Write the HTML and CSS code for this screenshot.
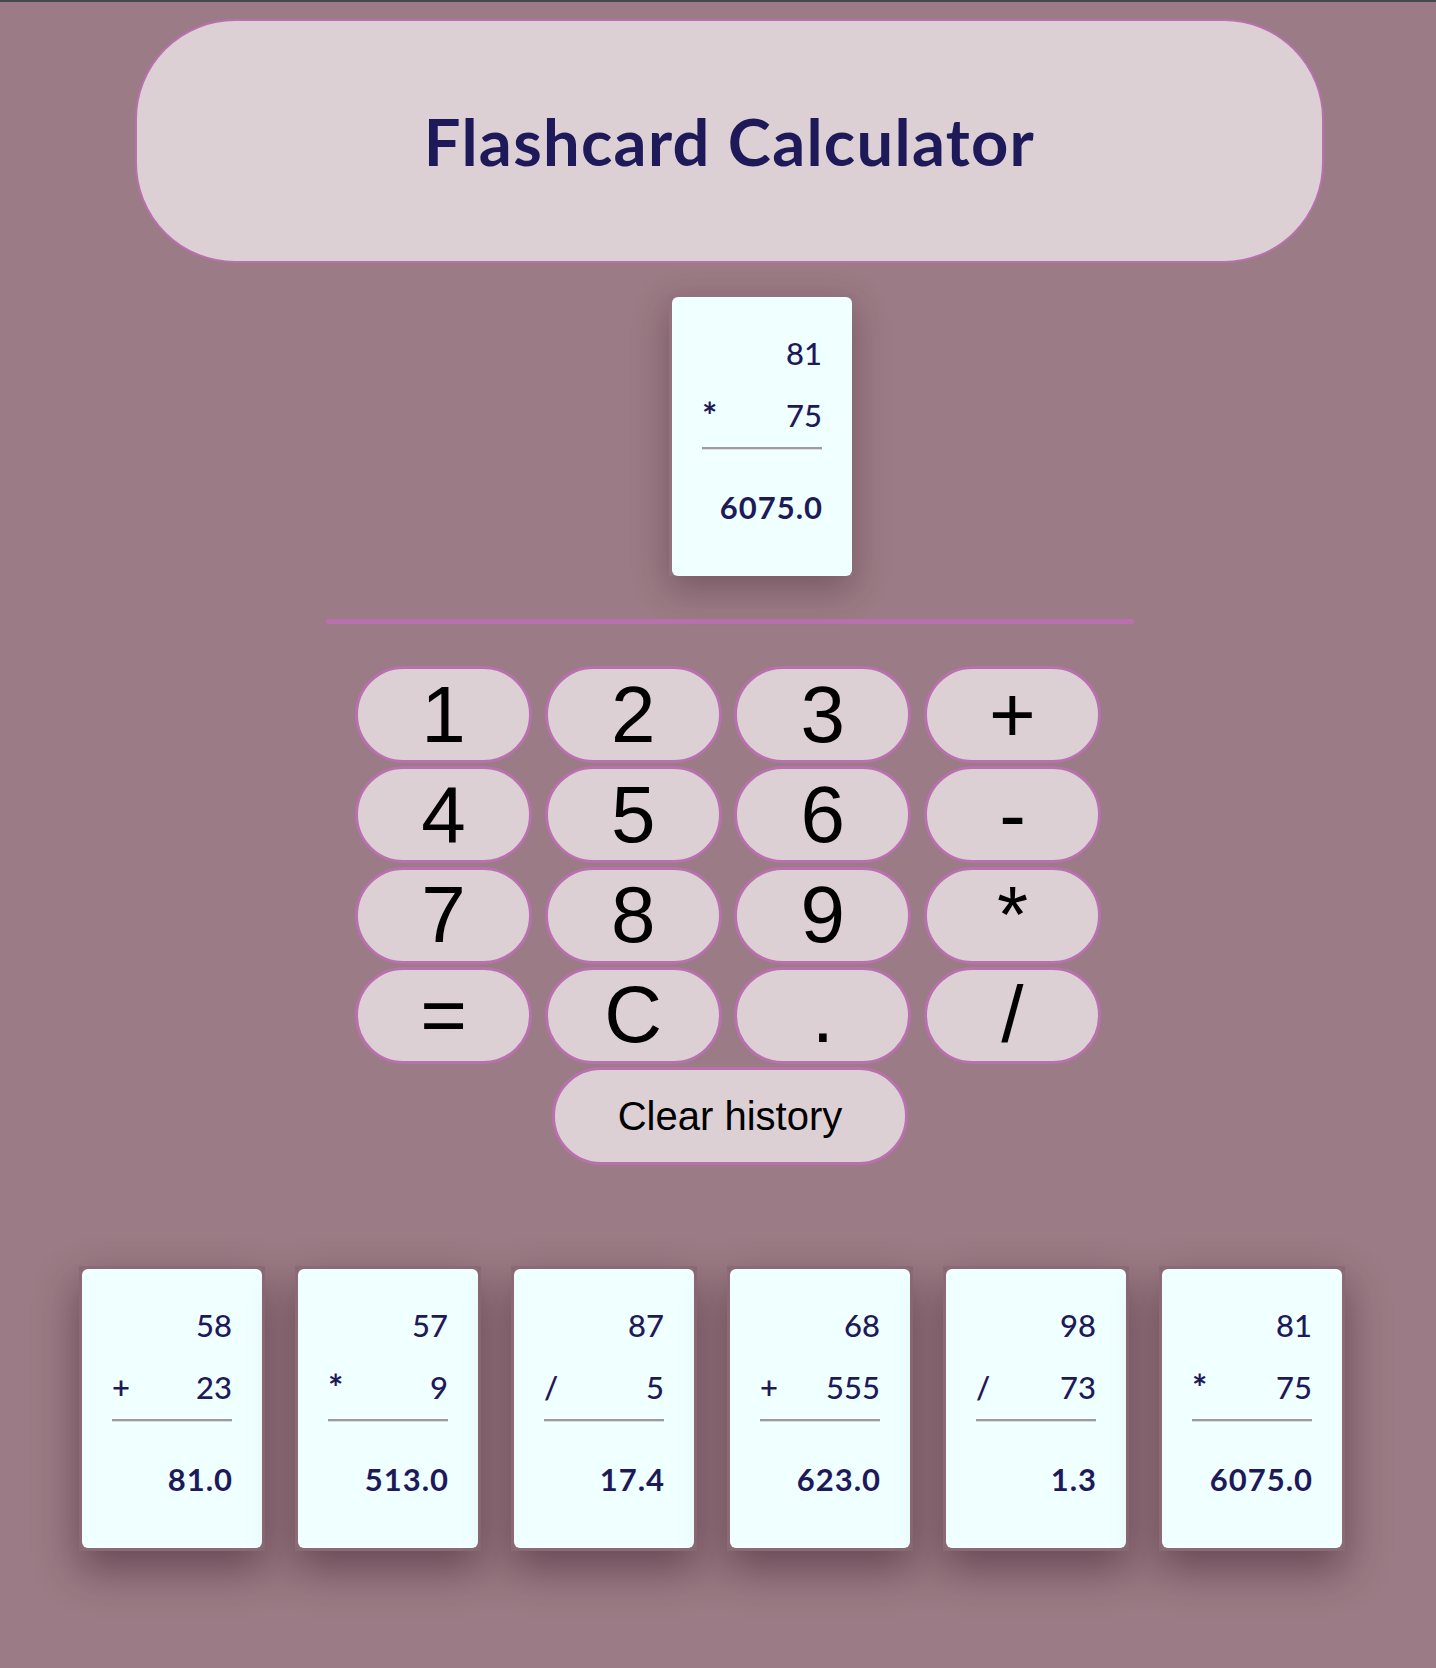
FILE: index.html
```html
<!DOCTYPE html>
<html>
<head>
<meta charset="utf-8">
<title>Flashcard Calculator</title>
<link rel="stylesheet" href="styles.css">
</head>
<body>
<div class="page">
  <header class="title-bar"><h1>Flashcard Calculator</h1></header>

  <div class="current">
    <div class="card-wrap current-wrap">
      <div class="card">
        <div class="row"><span class="op"></span><span class="num">81</span></div>
        <div class="row"><span class="op star">*</span><span class="num">75</span></div>
        <div class="rule"></div>
        <div class="result">6075.0</div>
      </div>
    </div>
  </div>

  <div class="divider"></div>

  <div class="keypad">
    <button class="key">1</button>
    <button class="key">2</button>
    <button class="key">3</button>
    <button class="key">+</button>
    <button class="key">4</button>
    <button class="key">5</button>
    <button class="key">6</button>
    <button class="key">-</button>
    <button class="key">7</button>
    <button class="key">8</button>
    <button class="key">9</button>
    <button class="key">*</button>
    <button class="key">=</button>
    <button class="key">C</button>
    <button class="key">.</button>
    <button class="key">/</button>
  </div>
  <button class="key clear">Clear history</button>
</div>

<div class="history">
  <div class="card-wrap">
    <div class="card">
      <div class="row"><span class="op"></span><span class="num">58</span></div>
      <div class="row"><span class="op">+</span><span class="num">23</span></div>
      <div class="rule"></div>
      <div class="result">81.0</div>
    </div>
  </div>
  <div class="card-wrap">
    <div class="card">
      <div class="row"><span class="op"></span><span class="num">57</span></div>
      <div class="row"><span class="op star">*</span><span class="num">9</span></div>
      <div class="rule"></div>
      <div class="result">513.0</div>
    </div>
  </div>
  <div class="card-wrap">
    <div class="card">
      <div class="row"><span class="op"></span><span class="num">87</span></div>
      <div class="row"><span class="op">/</span><span class="num">5</span></div>
      <div class="rule"></div>
      <div class="result">17.4</div>
    </div>
  </div>
  <div class="card-wrap">
    <div class="card">
      <div class="row"><span class="op"></span><span class="num">68</span></div>
      <div class="row"><span class="op">+</span><span class="num">555</span></div>
      <div class="rule"></div>
      <div class="result">623.0</div>
    </div>
  </div>
  <div class="card-wrap">
    <div class="card">
      <div class="row"><span class="op"></span><span class="num">98</span></div>
      <div class="row"><span class="op">/</span><span class="num">73</span></div>
      <div class="rule"></div>
      <div class="result">1.3</div>
    </div>
  </div>
  <div class="card-wrap">
    <div class="card">
      <div class="row"><span class="op"></span><span class="num">81</span></div>
      <div class="row"><span class="op star">*</span><span class="num">75</span></div>
      <div class="rule"></div>
      <div class="result">6075.0</div>
    </div>
  </div>
</div>
</body>
</html>
```

FILE: styles.css
```css
html {
  background: #9b7b85;
}

body {
  margin: 0;
  border-top: 2px solid #464a4e;
  background: #9b7b85;
  min-height: 1666px;
  font-family: "Liberation Sans", Arial, sans-serif;
}

.page {
  width: 1189px;
  margin-left: 135px;
  padding-top: 17px;
}

.title-bar {
  height: 244px;
  box-sizing: border-box;
  border: 2px solid #b870ae;
  border-radius: 100px;
  background: #ddd0d5;
  display: flex;
  align-items: center;
  justify-content: center;
}

.title-bar h1 {
  margin: 0;
  font-family: Lato, "Open Sans", sans-serif;
  font-weight: 700;
  font-size: 65px;
  color: #1e1a5a;
  letter-spacing: 1.3px;
}

.current {
  display: flex;
  justify-content: center;
  padding-left: 62px;
  margin-top: 31px;
}

.card-wrap {
  padding: 3px;
  background: #8b6975;
  box-shadow: 0 18px 40px rgba(40, 10, 25, 0.45);
  flex: none;
}

.current-wrap {
  padding: 3px 0 0 3px;
  background: #93717d;
  box-shadow: 0 12px 34px rgba(40, 10, 25, 0.32);
}

.card {
  width: 180px;
  height: 279px;
  box-sizing: border-box;
  padding: 25px 30px 0;
  background: #f0ffff;
  border-radius: 6px;
  color: #1e1a5a;
  font-family: Lato, "Open Sans", sans-serif;
  font-size: 31px;
  font-weight: 500;
}

.row {
  height: 62px;
  line-height: 62px;
  display: flex;
  justify-content: space-between;
}

.op {
  font-size: 31px;
  font-weight: 600;
}

.op.star {
  font-size: 36px;
  font-weight: 700;
}

.rule {
  margin-top: 1px;
  height: 0;
  border-top: 2px solid #9c9c9c;
  border-bottom: 1px solid #dcdcdc;
}

.result {
  margin-top: 26px;
  height: 62px;
  line-height: 62px;
  text-align: right;
  font-weight: 700;
  letter-spacing: 1px;
  margin-right: -1px;
}

.divider {
  width: 808px;
  height: 5px;
  background: #b870ae;
  border-radius: 3px;
  margin: 43px 0 0 191px;
}

.keypad {
  margin: 42px 0 0 220px;
  display: grid;
  grid-template-columns: repeat(4, 177px);
  grid-auto-rows: 97px;
  column-gap: 12.67px;
  row-gap: 3.33px;
  width: 746px;
}

.key {
  box-sizing: border-box;
  height: 97px;
  padding: 0;
  margin: 0;
  border: 3px solid #b870ae;
  border-radius: 50px;
  background: #ddd0d5;
  color: #000;
  font-family: "Liberation Sans", Arial, sans-serif;
  font-size: 80px;
  line-height: 1;
  display: flex;
  align-items: center;
  justify-content: center;
}

.clear {
  width: 356px;
  height: 98px;
  margin: 3px 0 0 417px;
  font-size: 40px;
}

.history {
  display: flex;
  gap: 30px;
  margin-top: 101px;
  padding-left: 79px;
}
```
